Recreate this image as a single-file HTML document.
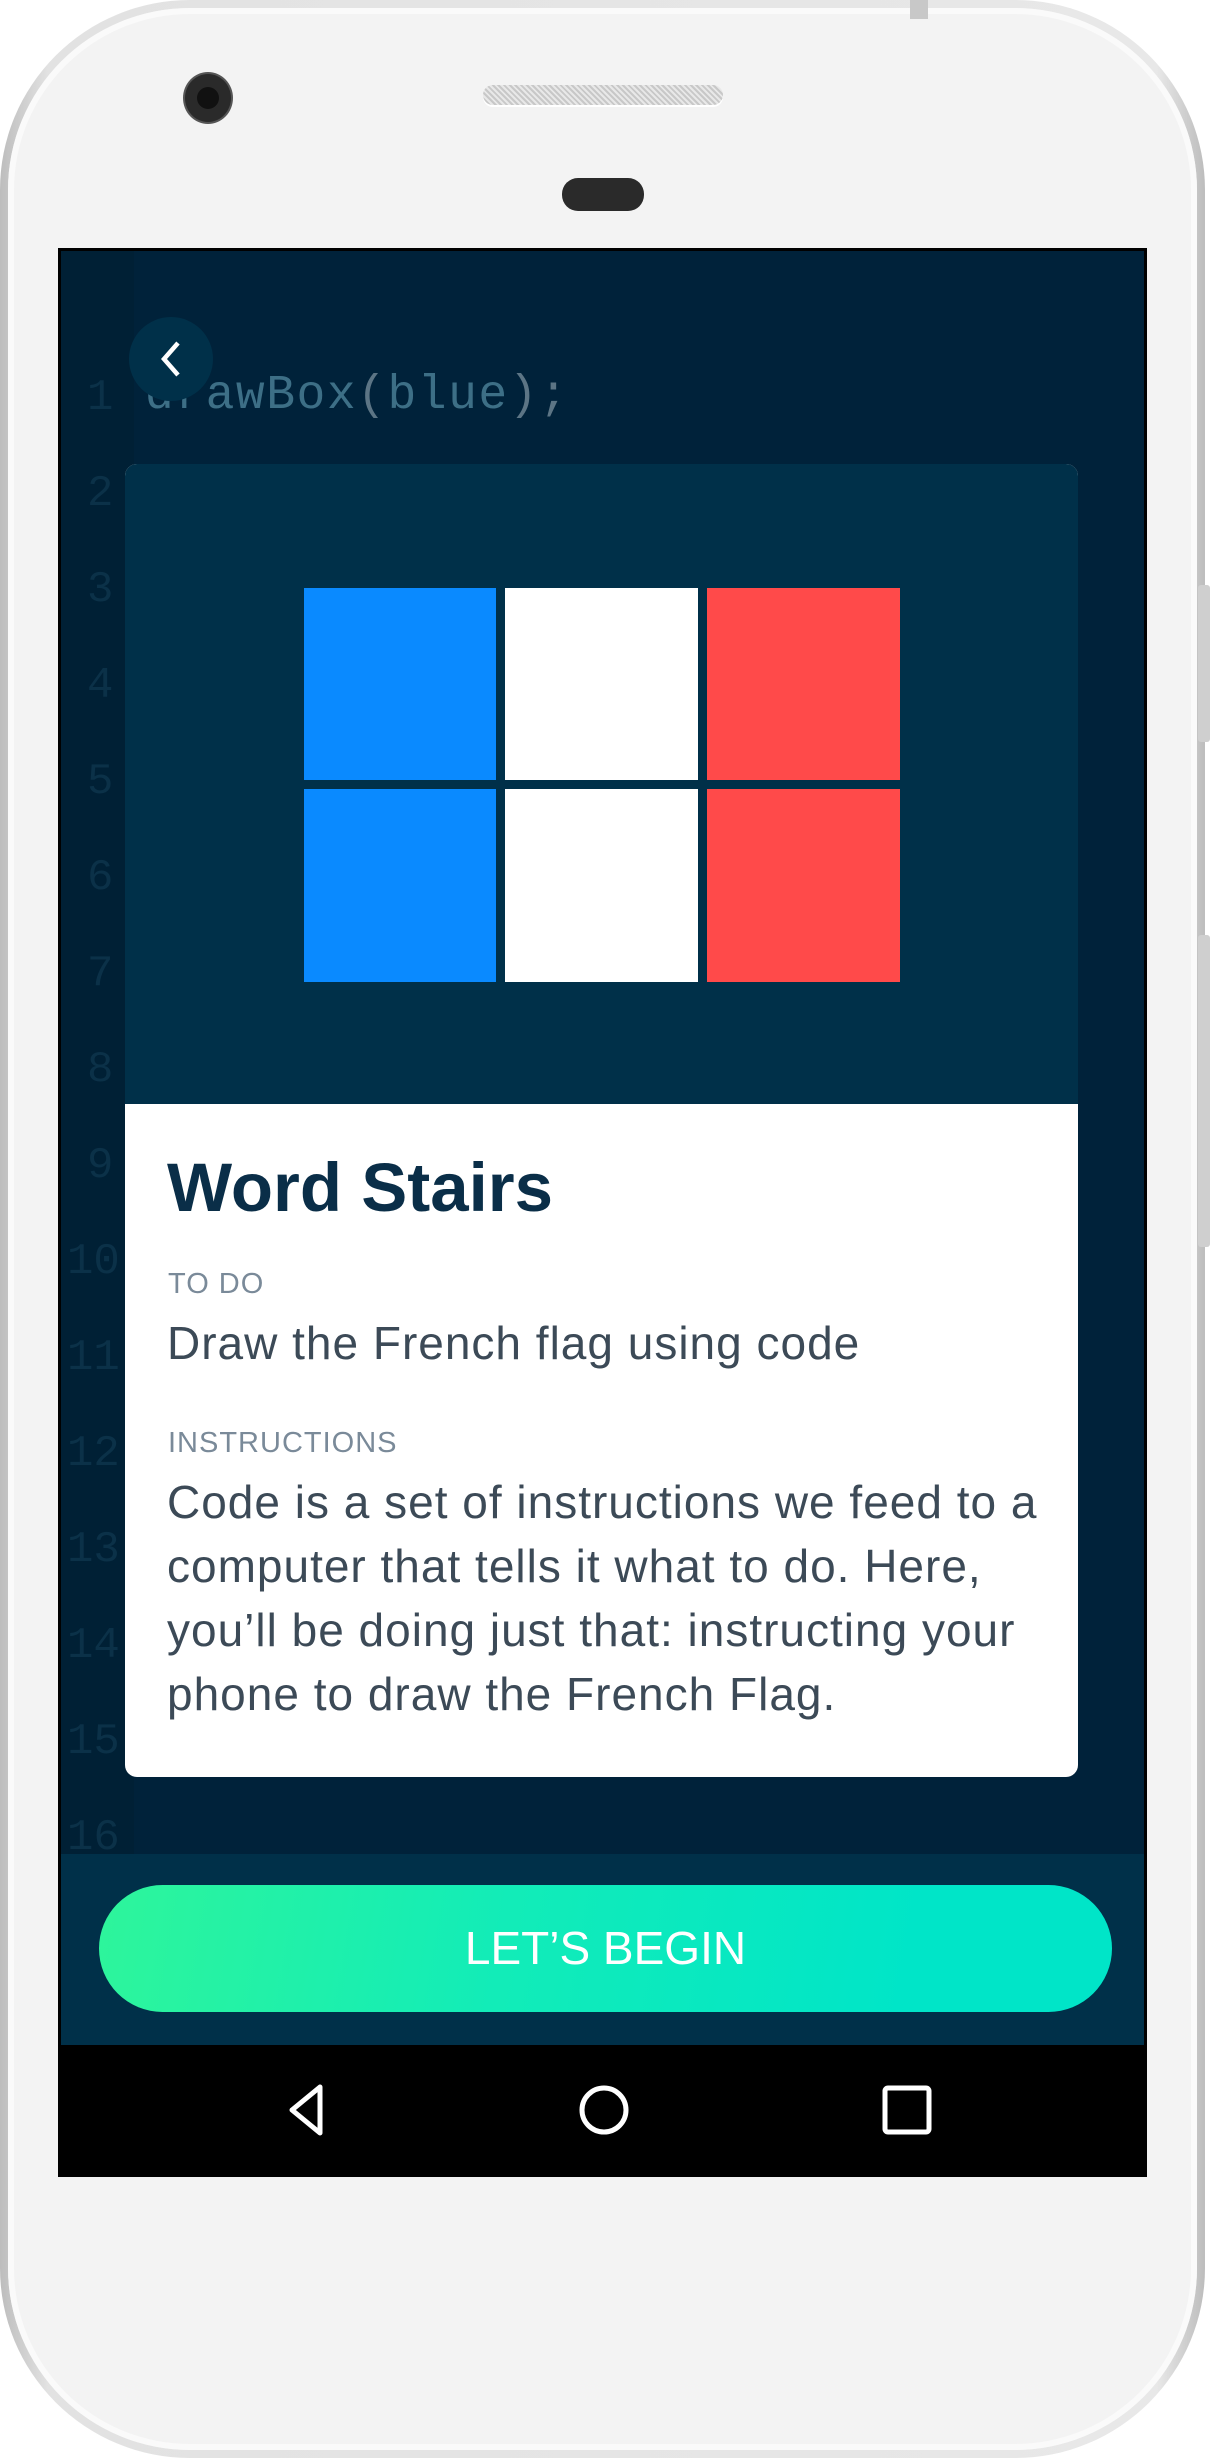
<!DOCTYPE html>
<html><head><meta charset="utf-8"><style>
*{margin:0;padding:0;box-sizing:border-box}
body{width:1214px;height:2458px;background:#fff;position:relative;overflow:hidden;font-family:"Liberation Sans",sans-serif}
.abs{position:absolute}
.outer{left:0;top:0;width:1205px;height:2458px;border-radius:190px;background:linear-gradient(90deg,#bdbdbd,#e2e2e2 4%,#e8e8e8 96%,#bdbdbd)}
.inner{left:8px;top:8px;width:1189px;height:2442px;border-radius:182px;background:#f3f3f3;box-shadow:inset 0 0 0 6px #fafafa}
.screen{left:58px;top:248px;width:1089px;height:1929px;background:#00223a;border:3px solid #000;overflow:hidden}
.ln{position:absolute;left:26px;font-family:"Liberation Mono",monospace;font-size:44px;color:#0b3148}
</style></head><body>
<div class="abs outer"></div>
<div class="abs inner"></div>
<div class="abs" style="left:1198px;top:585px;width:12px;height:157px;background:#cfcfcf;border-radius:3px"></div>
<div class="abs" style="left:1198px;top:935px;width:12px;height:312px;background:#cfcfcf;border-radius:3px"></div>
<div class="abs" style="left:910px;top:0;width:18px;height:19px;background:#c8c8c8"></div>
<div class="abs" style="left:185px;top:74px;width:46px;height:48px;border-radius:50%;background:#2a2a2a;box-shadow:0 0 0 2px #555"></div>
<div class="abs" style="left:197px;top:87px;width:22px;height:22px;border-radius:50%;background:#111"></div>
<div class="abs" style="left:483px;top:85px;width:240px;height:20px;border-radius:10px;background:repeating-linear-gradient(45deg,#c8c8c8 0 2px,#e8e8e8 2px 4px);box-shadow:0 2px 0 #fff"></div>
<div class="abs" style="left:562px;top:178px;width:82px;height:33px;border-radius:16px;background:#2a2a2a"></div>

<div class="abs screen">
  <div class="abs" style="left:0;top:0;width:73px;height:1606px;background:#002035"></div>
  <div class="ln" style="top:122px">1</div>
  <div class="ln" style="top:218px">2</div>
  <div class="ln" style="top:314px">3</div>
  <div class="ln" style="top:410px">4</div>
  <div class="ln" style="top:506px">5</div>
  <div class="ln" style="top:602px">6</div>
  <div class="ln" style="top:698px">7</div>
  <div class="ln" style="top:794px">8</div>
  <div class="ln" style="top:890px">9</div>
  <div class="ln" style="top:986px;left:6px">10</div>
  <div class="ln" style="top:1082px;left:6px">11</div>
  <div class="ln" style="top:1178px;left:6px">12</div>
  <div class="ln" style="top:1274px;left:6px">13</div>
  <div class="ln" style="top:1370px;left:6px">14</div>
  <div class="ln" style="top:1466px;left:6px">15</div>
  <div class="ln" style="top:1562px;left:6px">16</div>
  <div class="abs" style="left:84px;top:118px;font-family:'Liberation Mono',monospace;font-size:48px;color:#3d6f86;letter-spacing:1.5px">drawBox<span style="color:#5c7585">(</span>blue<span style="color:#5c7585">);</span></div>
  <div class="abs" style="left:68px;top:66px;width:84px;height:84px;border-radius:50%;background:#003049">
    <svg width="84" height="84" viewBox="0 0 84 84"><path d="M49 26 L35 42 L49 58" fill="none" stroke="#fff" stroke-width="4.5"/></svg>
  </div>
  <div class="abs" style="left:64px;top:213px;width:953px;height:1313px;border-radius:12px;background:#fff;overflow:hidden">
    <div class="abs" style="left:0;top:0;width:953px;height:640px;background:#003049"></div>
    <div class="abs" style="left:179px;top:124px;width:192px;height:192px;background:#0a8aff"></div>
    <div class="abs" style="left:380px;top:124px;width:193px;height:192px;background:#fff"></div>
    <div class="abs" style="left:582px;top:124px;width:193px;height:192px;background:#ff4a4a"></div>
    <div class="abs" style="left:179px;top:325px;width:192px;height:193px;background:#0a8aff"></div>
    <div class="abs" style="left:380px;top:325px;width:193px;height:193px;background:#fff"></div>
    <div class="abs" style="left:582px;top:325px;width:193px;height:193px;background:#ff4a4a"></div>
    <div class="abs" style="left:42px;top:684px;font-size:69px;font-weight:bold;color:#0a2e48">Word Stairs</div>
    <div class="abs" style="left:43px;top:804px;font-size:29px;color:#7a8a99;letter-spacing:1px">TO DO</div>
    <div class="abs" style="left:42px;top:852px;font-size:46px;letter-spacing:1px;color:#3c4a57">Draw the French flag using code</div>
    <div class="abs" style="left:43px;top:963px;font-size:29px;color:#7a8a99;letter-spacing:1px">INSTRUCTIONS</div>
    <div class="abs" style="left:42px;top:1006px;font-size:46px;letter-spacing:1px;line-height:64px;color:#3c4a57;white-space:nowrap">Code is a set of instructions we feed to a<br>computer that tells it what to do. Here,<br>you’ll be doing just that: instructing your<br>phone to draw the French Flag.</div>
  </div>
  <div class="abs" style="left:0;top:1603px;width:1089px;height:191px;background:#003049"></div>
  <div class="abs" style="left:38px;top:1634px;width:1013px;height:127px;border-radius:64px;background:linear-gradient(100deg,#2ef59b,#12ecb8 40%,#00e5c8 80%);color:#fff;font-size:46px;text-align:center;line-height:127px">LET’S BEGIN</div>
  <div class="abs" style="left:0;top:1794px;width:1089px;height:135px;background:#000">
    <svg class="abs" style="left:210px;top:30px" width="70" height="70" viewBox="0 0 70 70"><path d="M49 12 L49 58 L21 35 Z" fill="none" stroke="#fff" stroke-width="5" stroke-linejoin="round"/></svg>
    <svg class="abs" style="left:508px;top:30px" width="70" height="70" viewBox="0 0 70 70"><circle cx="35" cy="35" r="22" fill="none" stroke="#fff" stroke-width="5"/></svg>
    <svg class="abs" style="left:810px;top:30px" width="70" height="70" viewBox="0 0 70 70"><rect x="14" y="13" width="44" height="44" rx="3" fill="none" stroke="#fff" stroke-width="5"/></svg>
  </div>
</div>
</body></html>
